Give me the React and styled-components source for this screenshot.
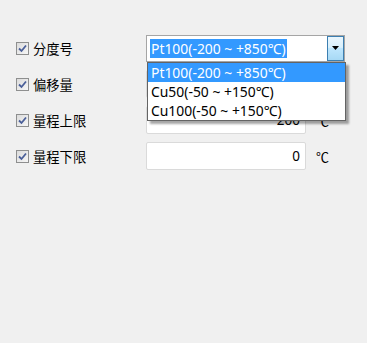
import React from "react";
import styled, { createGlobalStyle } from "styled-components";

const Global = createGlobalStyle`
  html, body { margin: 0; padding: 0; background: #f0f0f0; }
  body { font-family: "Segoe UI", "Noto Sans", "Noto Sans CJK SC", sans-serif; }
`;

const Page = styled.div`
  width: 367px;
  height: 343px;
  background: #f0f0f0;
  padding-top: 30px;
  box-sizing: border-box;
`;

const Form = styled.div`
  display: grid;
  grid-template-columns: 130px auto;
  grid-auto-rows: 36px;
  padding-left: 16px;
`;

const LabelCell = styled.label`
  display: flex;
  align-items: center;
  gap: 4px;
  font-family: "Noto Sans CJK SC", sans-serif;
  font-size: 13.3px;
  color: #000;
`;

const Box = styled.span`
  width: 13px;
  height: 13px;
  box-sizing: border-box;
  border: 1px solid #8e8f8f;
  background: linear-gradient(135deg, #dcdcdc, #f6f6f6);
  display: flex;
  align-items: center;
  justify-content: center;
`;

const ControlCell = styled.div`
  display: flex;
  align-items: center;
  gap: 10px;
  position: relative;
`;

const Combo = styled.div`
  position: relative;
  width: 199px;
  height: 27px;
  box-sizing: border-box;
  border: 1px solid #a5a5a5;
  background: #fff;
  display: flex;
  align-items: center;
  padding-left: 3px;
`;

const Selected = styled.span`
  background: #3399ff;
  color: #fff;
  font-size: 13.9px;
  line-height: 19px;
  padding: 0 1px;
  white-space: nowrap;
`;

const DropButton = styled.div`
  position: absolute;
  right: 0;
  top: 0;
  width: 17px;
  height: 25px;
  box-sizing: border-box;
  border: 1px solid #3c7fb1;
  background: linear-gradient(#eaf6fd 0%, #d9f0fc 45%, #bee6fd 50%, #a7d9f5 100%);
  display: flex;
  align-items: center;
  justify-content: center;
`;

const List = styled.div`
  position: absolute;
  left: 0;
  top: 26px;
  width: 199px;
  box-sizing: border-box;
  border: 1px solid #646464;
  background: #fff;
  box-shadow: 3px 3px 2px rgba(0, 0, 0, 0.35);
  z-index: 2;
`;

const Option = styled.div`
  height: 19px;
  line-height: 19px;
  padding-left: 3px;
  font-size: 13.9px;
  white-space: nowrap;
  color: ${(p) => (p.$active ? "#fff" : "#000")};
  background: ${(p) => (p.$active ? "#3399ff" : "transparent")};
`;

const Input = styled.div`
  width: 160px;
  height: 28px;
  box-sizing: border-box;
  border: 1px solid #dadada;
  border-radius: 2px;
  background: #fff;
  display: flex;
  align-items: center;
  justify-content: flex-end;
  padding-right: 5px;
  font-size: 13.5px;
  color: #000;
`;

const Unit = styled.span`
  font-family: "Noto Sans CJK SC", sans-serif;
  font-size: 13px;
  color: #000;
`;

const Check = () => (
  <Box>
    <svg width="9" height="9" viewBox="0 0 9 9">
      <path d="M1 4.5 L3.5 7 L8 1.5" fill="none" stroke="#4a5f99" strokeWidth="1.8" />
    </svg>
  </Box>
);

const options = ["Pt100(-200 ~ +850℃)", "Cu50(-50 ~ +150℃)", "Cu100(-50 ~ +150℃)"];

export default function App() {
  return (
    <>
      <Global />
      <Page>
        <Form>
          <LabelCell><Check />分度号</LabelCell>
          <ControlCell>
            <Combo>
              <Selected>{options[0]}</Selected>
              <DropButton>
                <svg width="7" height="4" viewBox="0 0 7 4">
                  <path d="M0 0 L7 0 L3.5 4 Z" fill="#000" />
                </svg>
              </DropButton>
              <List>
                {options.map((o, i) => (
                  <Option key={o} $active={i === 0}>{o}</Option>
                ))}
              </List>
            </Combo>
          </ControlCell>

          <LabelCell><Check />偏移量</LabelCell>
          <ControlCell>
            <Input>0</Input>
            <Unit>℃</Unit>
          </ControlCell>

          <LabelCell><Check />量程上限</LabelCell>
          <ControlCell>
            <Input>200</Input>
            <Unit>℃</Unit>
          </ControlCell>

          <LabelCell><Check />量程下限</LabelCell>
          <ControlCell>
            <Input>0</Input>
            <Unit>℃</Unit>
          </ControlCell>
        </Form>
      </Page>
    </>
  );
}
